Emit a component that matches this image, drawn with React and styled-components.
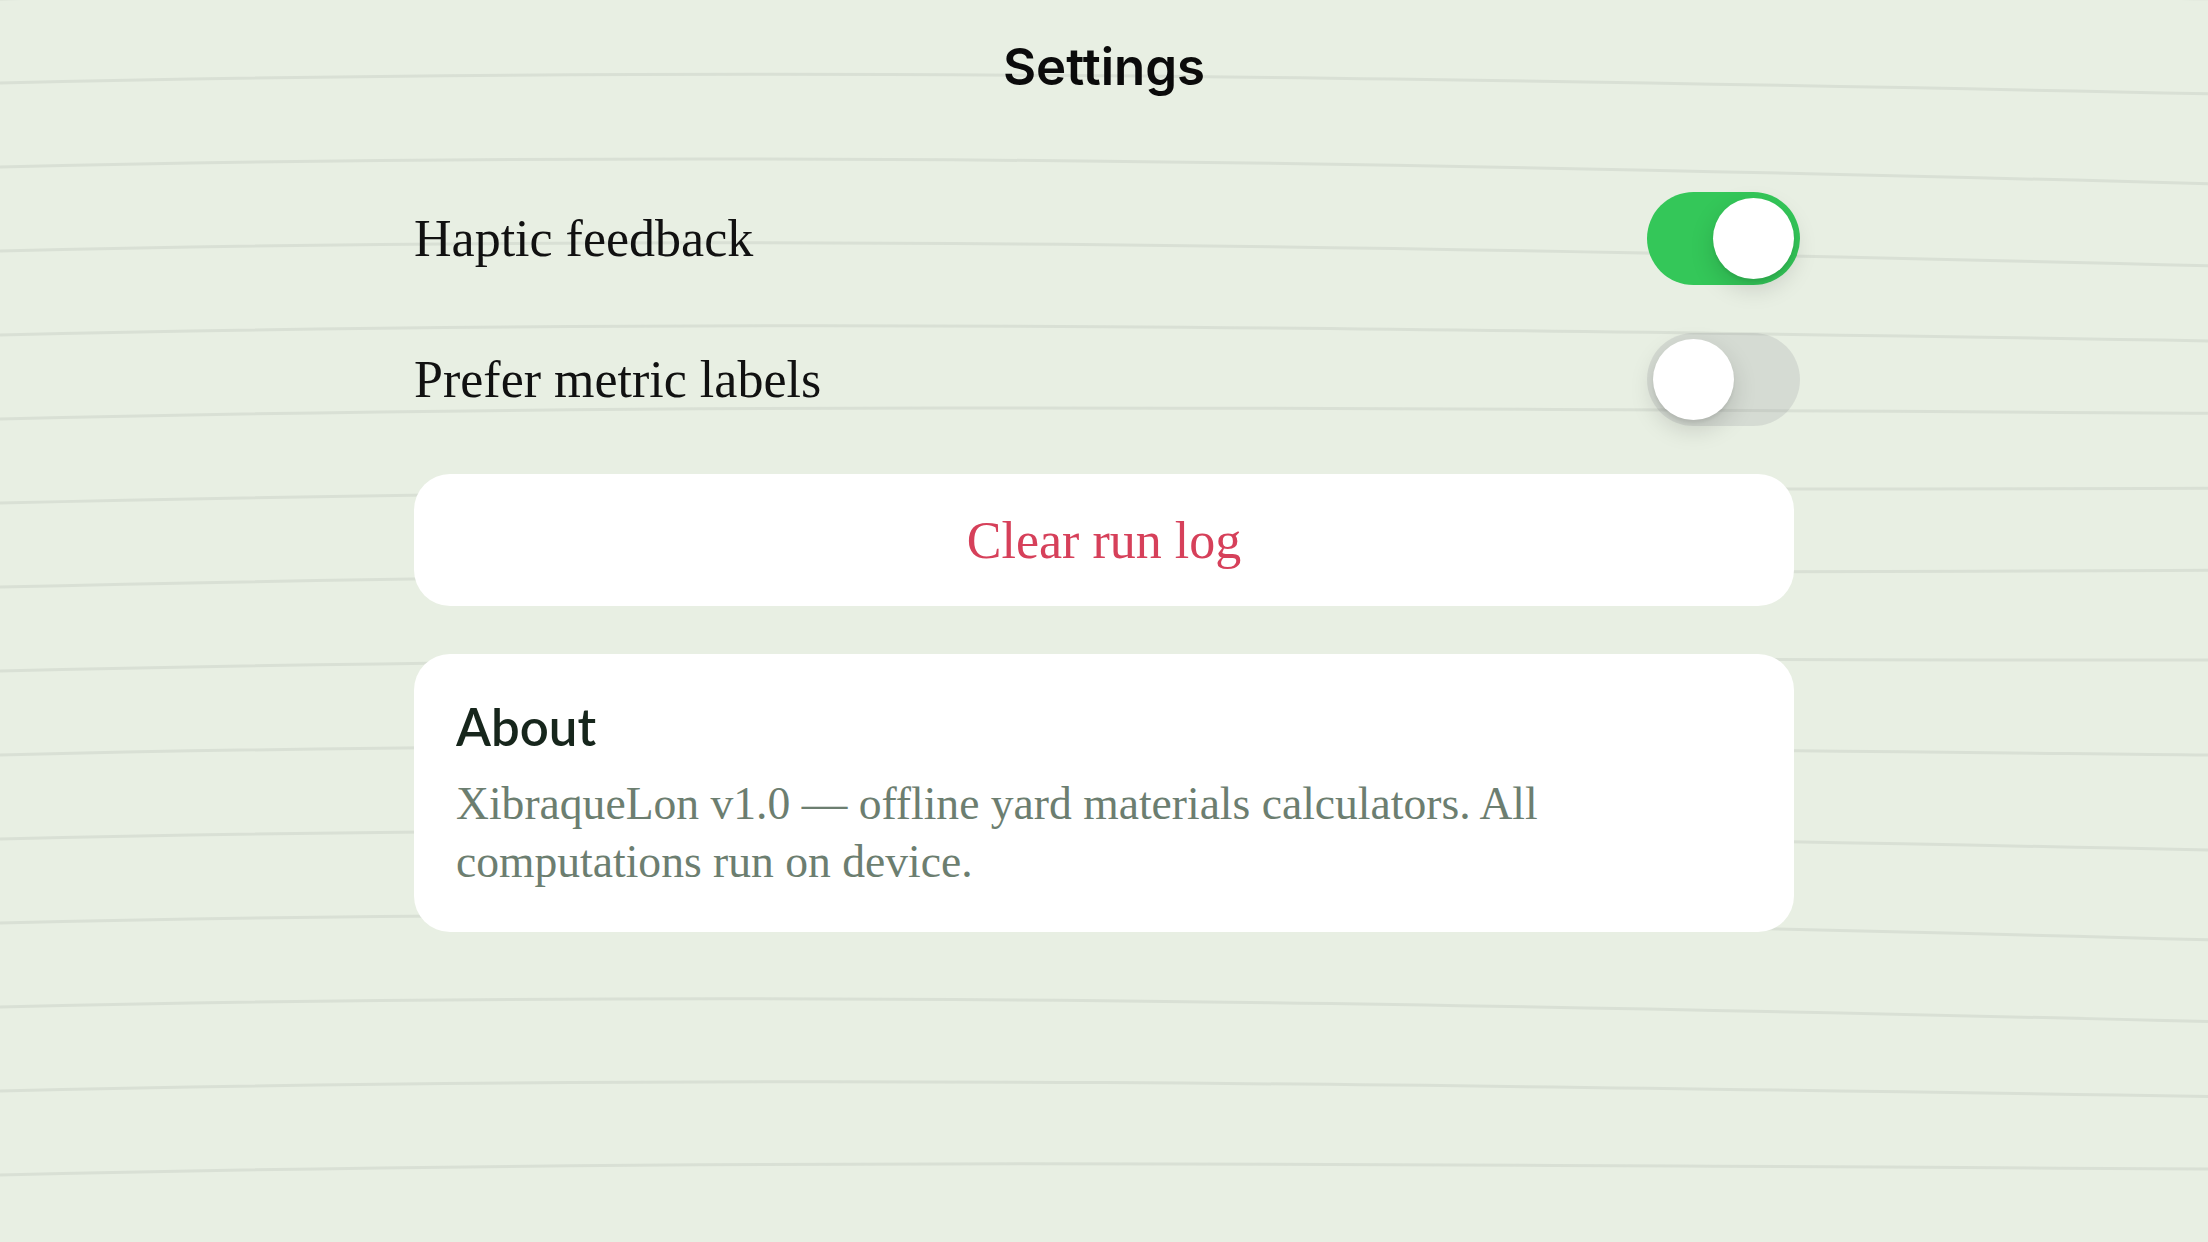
import React, { useState } from 'react';
import styled, { createGlobalStyle } from 'styled-components';

const GlobalStyle = createGlobalStyle`
    html, body {
        margin: 0;
        padding: 0;
        background: #e8efe3;
    }
    body {
        font-family: "Liberation Serif", "Times New Roman", serif;
        -webkit-font-smoothing: antialiased;
    }
`;

const Screen = styled.div`
    position: relative;
    min-height: 1242px;
    overflow: hidden;
    background: #e8efe3;
`;

const PaperLines = styled.svg`
    position: absolute;
    top: 0;
    left: 0;
    width: 2208px;
    height: 1242px;
    pointer-events: none;
    z-index: 0;
`;

const Header = styled.header`
    position: relative;
    z-index: 1;
    height: 132px;
    display: flex;
    align-items: center;
    justify-content: center;
`;

const Title = styled.h1`
    margin: 0;
    font-family: Inter, "Liberation Sans", sans-serif;
    font-weight: 600;
    font-size: 51px;
    line-height: 1;
    color: #0b0b0b;
`;

const Content = styled.main`
    position: relative;
    z-index: 1;
    max-width: 1380px;
    margin: 0 auto;
    padding-top: 36px;
    display: flex;
    flex-direction: column;
`;

const Row = styled.div`
    display: flex;
    align-items: center;
    justify-content: space-between;
    padding: 24px 0;
`;

const Label = styled.span`
    font-size: 52px;
    color: #111;
`;

const Track = styled.button`
    width: 153px;
    height: 93px;
    margin-right: -6px;
    padding: 6px;
    border: none;
    border-radius: 47px;
    display: flex;
    justify-content: ${p => (p.$on ? 'flex-end' : 'flex-start')};
    align-items: center;
    background: ${p => (p.$on ? '#34c759' : 'rgba(120, 120, 128, 0.16)')};
    cursor: pointer;
`;

const Thumb = styled.span`
    width: 81px;
    height: 81px;
    border-radius: 50%;
    background: #fff;
    box-shadow: 0 9px 24px rgba(0, 0, 0, 0.15), 0 3px 3px rgba(0, 0, 0, 0.06);
`;

const ClearButton = styled.button`
    margin-top: 24px;
    height: 132px;
    width: 100%;
    border: none;
    border-radius: 36px;
    background: #ffffff;
    font-family: "Liberation Serif", "Times New Roman", serif;
    font-size: 52px;
    color: #d6405a;
    cursor: pointer;
`;

const AboutCard = styled.section`
    margin-top: 48px;
    background: #ffffff;
    border-radius: 36px;
    padding: 42px 42px 41px;
`;

const AboutTitle = styled.h2`
    margin: 0 0 18px;
    font-family: Lato, "Open Sans", sans-serif;
    font-weight: 600;
    font-size: 51px;
    line-height: 1.2;
    color: #17261c;
`;

const AboutText = styled.p`
    margin: 0;
    font-size: 45.6px;
    line-height: 58px;
    color: #6c7e70;
`;

const W = 2208;
const linePaths = Array.from({ length: 16 }, (_, k) => {
    const i = k - 1;
    const y = 83 + 84 * i;
    const r = 17 * Math.sin(0.7 * i + 0.69);
    const c2 = -8 + 0.3 * r;
    return `M0 ${y} C736 ${y - 18} 1472 ${(y + c2).toFixed(1)} ${W} ${(y + r).toFixed(1)}`;
});

const Switch = ({ on, onToggle }) => (
    <Track $on={on} role="switch" aria-checked={on} onClick={onToggle}>
        <Thumb />
    </Track>
);

const App = () => {
    const [haptic, setHaptic] = useState(true);
    const [metric, setMetric] = useState(false);

    return (
        <Screen>
            <GlobalStyle />
            <PaperLines viewBox="0 0 2208 1242">
                {linePaths.map((d, i) => (
                    <path key={i} d={d} fill="none" stroke="#d9e0d5" strokeWidth="3" />
                ))}
            </PaperLines>
            <Header>
                <Title>Settings</Title>
            </Header>
            <Content>
                <Row>
                    <Label>Haptic feedback</Label>
                    <Switch on={haptic} onToggle={() => setHaptic(v => !v)} />
                </Row>
                <Row>
                    <Label>Prefer metric labels</Label>
                    <Switch on={metric} onToggle={() => setMetric(v => !v)} />
                </Row>
                <ClearButton>Clear run log</ClearButton>
                <AboutCard>
                    <AboutTitle>About</AboutTitle>
                    <AboutText>
                        XibraqueLon v1.0 — offline yard materials calculators. All computations run on device.
                    </AboutText>
                </AboutCard>
            </Content>
        </Screen>
    );
};

export default App;
